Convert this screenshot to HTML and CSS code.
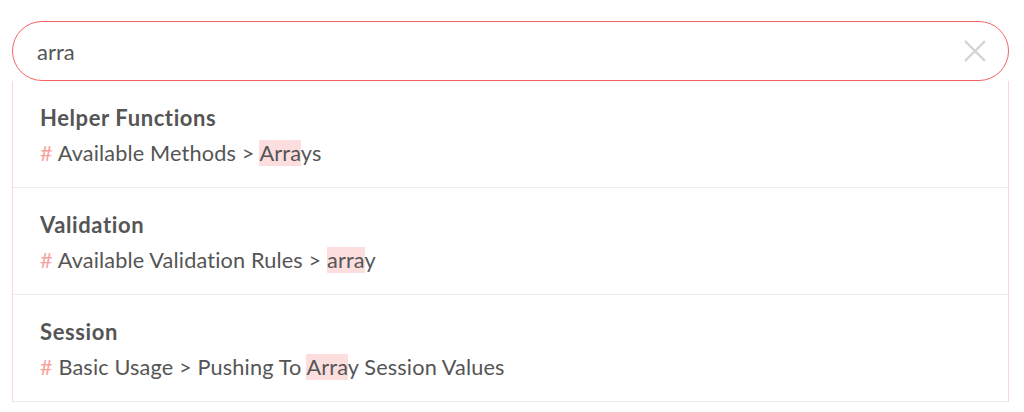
FILE: index.html
```html
<!DOCTYPE html>
<html>
<head>
<meta charset="utf-8">
<link rel="stylesheet" href="styles.css">
</head>
<body>
<div class="wrap">
  <div class="search">
    <span class="query">arra</span>
    <svg class="clear" width="24" height="24" viewBox="0 0 24 24"><path d="M2 2L22 22M22 2L2 22" stroke="#d3d3d3" stroke-width="2.4" fill="none"/></svg>
  </div>
  <div class="results">
    <div class="item">
      <div class="title">Helper Functions</div>
      <div class="sub"><span class="hash">#</span> Available Methods &gt; <mark>Arra</mark>ys</div>
    </div>
    <div class="item">
      <div class="title">Validation</div>
      <div class="sub"><span class="hash">#</span> Available Validation Rules &gt; <mark>arra</mark>y</div>
    </div>
    <div class="item">
      <div class="title">Session</div>
      <div class="sub"><span class="hash">#</span> Basic Usage &gt; Pushing To <mark>Arra</mark>y Session Values</div>
    </div>
  </div>
</div>
</body>
</html>
```
FILE: styles.css
```css
html, body { margin: 0; padding: 0; background: #fff; }
body { font-family: Lato, "Open Sans", sans-serif; color: #555; overflow: hidden; height: 412px; }
.wrap { padding: 21px 15px 0 12px; }
.search {
  height: 60px;
  box-sizing: border-box;
  border: 1.5px solid #f4645f;
  border-radius: 30px;
  display: flex;
  align-items: center;
  justify-content: space-between;
  padding: 0 21px 0 24px;
}
.query { font-size: 22px; color: #555; }
.clear { display: block; }
.results {
  border-left: 1px solid #ffd5d4;
  border-right: 1px solid #ffd5d4;
}
.item {
  height: 107px;
  box-sizing: border-box;
  padding: 22px 27px 0;
  border-bottom: 1px solid #ececec;
}
.title { font-size: 22px; font-weight: 700; line-height: 30px; color: #555; letter-spacing: 0.6px; }
.sub { font-size: 21.7px; line-height: 28px; margin-top: 6px; color: #555; letter-spacing: 0.15px; }
.hash { color: #f9a3a0; }
mark { background: #fddede; color: inherit; }
```
